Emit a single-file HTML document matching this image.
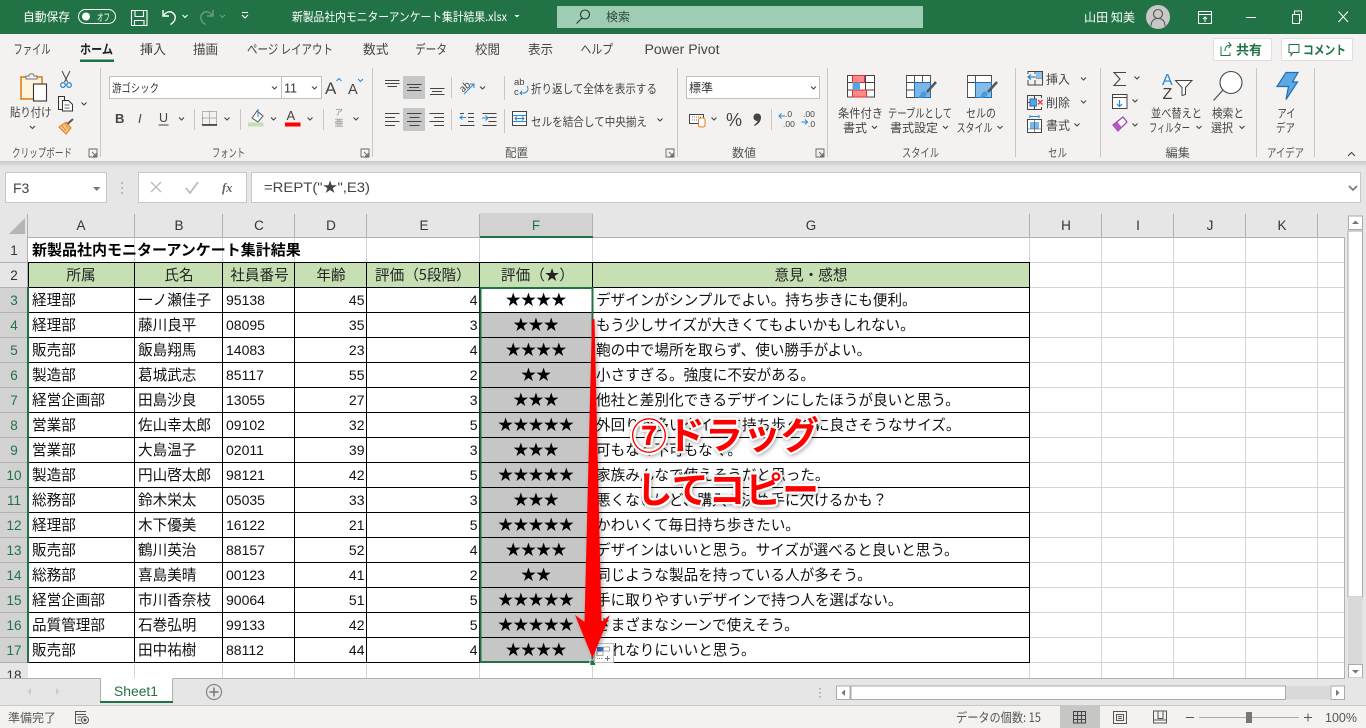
<!DOCTYPE html>
<html lang="ja"><head><meta charset="utf-8"><title>新製品社内モニターアンケート集計結果.xlsx</title>
<style>
html,body{margin:0;padding:0;width:1366px;height:728px;overflow:hidden;background:#fff}
svg{display:block;position:absolute;left:0;top:0}
text{font-family:"Liberation Sans","Noto Sans CJK JP",sans-serif;white-space:pre}
.j{font-family:"Noto Sans CJK JP","Liberation Sans",sans-serif}
.t{font-size:12px;fill:#fff}
.r{font-size:12px;fill:#444}
.l{font-size:12px;fill:#555}
.h{font-size:13.5px;fill:#333;text-anchor:middle}
.n{font-size:14px;fill:#111}
.nr{font-size:14px;fill:#111;text-anchor:end}
.s{font-family:"Noto Sans CJK JP",sans-serif;font-size:14.6px;fill:#111}
.c{font-family:"Noto Sans CJK JP",sans-serif;font-size:14.6px;fill:#222;text-anchor:middle}
.cs{font-family:"Noto Sans CJK JP",sans-serif;font-size:14.6px;fill:#222}
.st{font-family:"Noto Sans CJK JP",sans-serif;font-size:15.2px;fill:#000;text-anchor:middle}
.g{font-size:13.5px;fill:#217346;text-anchor:middle}
.big{font-family:"Noto Sans CJK JP",sans-serif;font-weight:700;fill:#f00;stroke:#fff;stroke-width:4.5px;paint-order:stroke;stroke-linejoin:round;font-size:37px}
</style></head><body>
<svg width="1366" height="728" viewBox="0 0 1366 728" xmlns="http://www.w3.org/2000/svg">
<defs>
<path id="v" d="M-2.5-1.5 0 1 2.5-1.5" fill="none" stroke="#444" stroke-width="1.1"/>
<linearGradient id="sh" x1="0" y1="0" x2="0" y2="1"><stop offset="0" stop-color="#c9c9c9"/><stop offset="1" stop-color="#e6e6e6"/></linearGradient>
<g id="launch"><path d="M0 0h8v8h-8z M3 3l4 4M7 4v3H4" fill="none" stroke="#666" stroke-width=".9"/></g>
</defs>

<!-- backgrounds -->
<rect width="1366" height="728" fill="#e6e6e6"/>
<rect width="1366" height="34" fill="#217346"/>
<rect y="34" width="1366" height="127" fill="#f3f2f1"/>
<rect y="161" width="1366" height="6" fill="url(#sh)"/>

<!-- title bar -->
<text class="t j" x="23" y="21" textLength="47">自動保存</text>
<rect x="78.500" y="9.500" width="37" height="14" rx="7" fill="none" stroke="#fff"/>
<circle cx="86" cy="16.500" r="4" fill="#fff"/>
<text class="j" x="97" y="21" font-size="10" fill="#fff" textLength="13">オフ</text>
<path d="M131.500 10.500h15.500v15h-15.500z M135 10.500v6h8.500v-6 M134.500 25.500v-5h9.500v5" fill="none" stroke="#fff" stroke-width="1.100"/>
<path d="M163 10v6h6 M163.500 15.500c3-4 7-5 10-2 3.500 3.500 1.500 8-3 11" fill="none" stroke="#fff" stroke-width="1.400"/>
<path d="M182.500 15 185 17.500 187.500 15" fill="none" stroke="#fff" stroke-width="1.100"/>
<path d="M213 10v6h-6 M212.500 15.500c-3-4-7-5-10-2-3.500 3.500-1.500 8 3 11" fill="none" stroke="#6a9e81" stroke-width="1.400"/>
<path d="M220 15 222.500 17.500 225 15" fill="none" stroke="#6a9e81" stroke-width="1.100"/>
<path d="M242 12.500h6M242 15 245 18 248 15" fill="none" stroke="#fff" stroke-width="1.100"/>
<text class="t j" x="292" y="21" textLength="215">新製品社内モニターアンケート集計結果.xlsx</text>
<path d="M514.500 15h5l-2.500 2.500z" fill="#fff"/>
<rect x="557" y="6" width="366" height="22" fill="#9fcdb3"/>
<circle cx="585" cy="14.500" r="4.500" fill="none" stroke="#1f3d2c" stroke-width="1.100"/><path d="M582 18 576.500 23.500" stroke="#1f3d2c" stroke-width="1.100"/>
<text class="j" x="606" y="21" font-size="12" fill="#2b4a38" textLength="24">検索</text>
<text class="t j" x="1084" y="21.500" textLength="51">山田 知美</text>
<circle cx="1158" cy="17" r="12" fill="#c8c8c8"/>
<circle cx="1158" cy="14" r="4.500" fill="none" stroke="#555" stroke-width="1.100"/><path d="M1151 26c0-5 3-7.500 7-7.500s7 2.500 7 7.500" fill="none" stroke="#555" stroke-width="1.100"/>
<path d="M1198.500 11.500h13v12h-13z M1198.500 14.500h13 M1205 22v-5 M1203 19l2-2 2 2" fill="none" stroke="#fff" stroke-width="1"/>
<path d="M1246 17.500h10" stroke="#fff" stroke-width="1"/>
<path d="M1292.500 14.500h7v9h-7z M1294.500 14v-3h7v9h-2" fill="none" stroke="#fff" stroke-width="1"/>
<path d="M1338.500 11.500 1348 22M1348 11.500 1338.500 22" stroke="#fff" stroke-width="1"/>

<!-- tabs -->
<text class="r j" x="13.500" y="54" style="font-size:13px" textLength="37">ファイル</text>
<text class="r j" x="80" y="54" style="font-size:13px;font-weight:700;fill:#222" textLength="33">ホーム</text>
<rect x="80" y="59.500" width="34" height="2.500" fill="#217346"/>
<text class="r j" x="140" y="54" style="font-size:13px" textLength="26">挿入</text>
<text class="r j" x="193" y="54" style="font-size:13px" textLength="25">描画</text>
<text class="r j" x="247" y="54" style="font-size:13px" textLength="86">ページ レイアウト</text>
<text class="r j" x="363" y="54" style="font-size:13px" textLength="25.500">数式</text>
<text class="r j" x="415" y="54" style="font-size:13px" textLength="32">データ</text>
<text class="r j" x="475" y="54" style="font-size:13px" textLength="25">校閲</text>
<text class="r j" x="528" y="54" style="font-size:13px" textLength="25">表示</text>
<text class="r j" x="580.500" y="54" style="font-size:13px" textLength="32.500">ヘルプ</text>
<text class="r" x="644.500" y="54" style="font-size:13.500px" textLength="75">Power Pivot</text>
<rect x="1213.500" y="38.500" width="58" height="22" rx="1" fill="#fff" stroke="#e1dfdd"/>
<path d="M1221 46.500v9h9v-3 M1225 51c0-4 2-6 6-6l-2.500-3 M1231 45l-2.500 3" fill="none" stroke="#217346"/>
<text class="j" x="1236" y="54.500" font-size="13" font-weight="700" fill="#217346" textLength="26">共有</text>
<rect x="1281.500" y="38.500" width="71" height="22" rx="1" fill="#fff" stroke="#e1dfdd"/>
<path d="M1289 44.500h10v8h-6l-2 3v-3h-2z" fill="none" stroke="#217346"/>
<text class="j" x="1303" y="54.500" font-size="12.500" font-weight="700" fill="#217346" textLength="43">コメント</text>

<!-- ribbon separators -->
<path d="M100.500 68v89M372.500 68v89M677.500 68v89M827.500 68v89M1015.500 68v89M1100.500 68v89M1256.500 68v89M1314.500 68v89" stroke="#c8c6c4"/>

<!-- clipboard -->
<path d="M21 77h21v22h-21z" fill="#fdf3dc" stroke="#d9780f" stroke-width="1.500"/>
<path d="M26 79v-3h3c0-3 5-3 5 0h3v3z" fill="#f3f2f1" stroke="#777"/>
<rect x="33.500" y="84" width="13" height="17" fill="#fff" stroke="#333" stroke-width="1.100"/>
<path d="M62 71 67.500 82M70 71 64.500 82" stroke="#444"/><circle cx="63" cy="85" r="2.300" fill="#fff" stroke="#2a87d0" stroke-width="1.300"/><circle cx="69" cy="85" r="2.300" fill="#fff" stroke="#2a87d0" stroke-width="1.300"/>
<path d="M58.500 96.500h6v13h-6z" fill="#f3f2f1" stroke="#333"/><path d="M62.500 100.500h6l4 4v6.500h-10z" fill="#fff" stroke="#333"/><path d="M64.500 105h5M64.500 108h5" stroke="#333" stroke-width=".8"/>
<use href="#v" x="84" y="104"/>
<path d="M59 127 66 122 71 128 66 134z" fill="#f8c58c" stroke="#e07b12"/><path d="M62 125.500 66 131M65 123.500 68.500 129" stroke="#e07b12" stroke-width=".8"/><path d="M67.500 124 73 119" stroke="#555" stroke-width="2"/>
<text class="r j" x="10" y="116.500" textLength="41.500">貼り付け</text>
<use href="#v" x="32.500" y="127.500"/>
<text class="l j" x="12" y="157" textLength="60">クリップボード</text>
<use href="#launch" x="89" y="149"/>

<!-- font -->
<rect x="109.500" y="76.500" width="172" height="22" fill="#fff" stroke="#c0c0c0"/>
<rect x="281.500" y="76.500" width="40" height="22" fill="#fff" stroke="#c0c0c0"/>
<text class="j" x="112" y="92" font-size="11.500" fill="#333" textLength="47">游ゴシック</text>
<text x="284" y="92.500" font-size="12.500" fill="#333" textLength="13">11</text>
<use href="#v" x="274.500" y="88"/><use href="#v" x="314.500" y="88"/>
<text x="325" y="94" font-size="17" fill="#444">A</text><path d="M336.500 81 339 78.500 341.500 81" fill="none" stroke="#2a87d0"/>
<text x="348" y="94" font-size="14.500" fill="#444">A</text><path d="M358 79 360.500 81.500 363 79" fill="none" stroke="#2a87d0"/>
<text x="115" y="123" font-size="13" font-weight="700" fill="#444">B</text>
<text x="138" y="123" font-size="13" font-style="italic" fill="#444">I</text>
<text x="159" y="122" font-size="12.500" fill="#444">U</text><path d="M158.500 125h10" stroke="#444"/>
<use href="#v" x="181.500" y="119"/>
<path d="M194.500 109v21" stroke="#c8c6c4"/>
<path d="M202.500 111.500h14v13h-14z M209.500 111.500v13M202.500 118h14" fill="none" stroke="#777" stroke-dasharray="1 1"/><path d="M202 125h15" stroke="#222" stroke-width="1.400"/>
<use href="#v" x="227" y="119"/>
<path d="M240.500 109v21" stroke="#c8c6c4"/>
<path d="M252 118 257 111 263 116 258 122z" fill="#fff" stroke="#555"/><path d="M258 109v8" stroke="#2a87d0"/>
<rect x="248" y="122.500" width="15.500" height="4" fill="#c6e0b4"/>
<use href="#v" x="273.500" y="119"/>
<text x="286.500" y="120" font-size="13" fill="#444">A</text><rect x="285" y="122.500" width="15.500" height="4" fill="#f00"/>
<use href="#v" x="310" y="119"/>
<path d="M323.500 109v21" stroke="#c8c6c4"/>
<text class="j" x="335" y="115" font-size="8" fill="#888">ア</text><text class="j" x="334.500" y="126" font-size="9" fill="#888">亜</text>
<use href="#v" x="356" y="119"/>
<text class="l j" x="212" y="157" textLength="33">フォント</text>
<use href="#launch" x="361" y="149"/>

<!-- alignment -->
<rect x="403" y="76" width="22" height="23" fill="#c6c6c6"/>
<rect x="403" y="108" width="22" height="23" fill="#c6c6c6"/>
<path d="M385 80.500h14.500M385 83.500h14.500 M387.500 86.500h9.500" stroke="#444"/>
<path d="M407 84.500h14.500M409 87.500h10M407 90.500h14.500" stroke="#444"/>
<path d="M430 88.500h14.500M432 91.500h10M430 94.500h14.500" stroke="#444"/>
<path d="M385 113.500h14.500M385 117.500h10M385 121.500h14.500M385 125.500h10" stroke="#444"/>
<path d="M407 113.500h14.500M409.500 117.500h10M407 121.500h14.500M409.500 125.500h10" stroke="#444"/>
<path d="M429.500 113.500h14.500M434 117.500h10M429.500 121.500h14.500M434 125.500h10" stroke="#444"/>
<path d="M451.500 77v21M451.500 109v21M504.500 76v24M504.500 109v24" stroke="#c8c6c4"/>
<text class="j" x="459" y="89" font-size="9.500" fill="#444" transform="rotate(-40 466 86)">ab</text>
<path d="M464 94 474 84M470 84h4v4" fill="none" stroke="#2a87d0"/>
<use href="#v" x="482.500" y="88"/>
<path d="M468 113.500h6M468 117.500h6M468 121.500h6M460 125.500h14.500M460 113.500h4" fill="none" stroke="#444"/>
<path d="M460 117.500h6M462.500 115.500l-2.500 2 2.500 2" fill="none" stroke="#2a87d0"/>
<path d="M482.500 113.500h14M488.500 117.500h8M488.500 121.500h8M482.500 125.500h14" stroke="#444"/>
<path d="M482 118h6M485.500 115.500l2.500 2.500-2.500 2.500" fill="none" stroke="#2a87d0"/>
<text x="514" y="85" font-size="9.500" fill="#444">ab</text><text x="514" y="95" font-size="9.500" fill="#444">c</text>
<path d="M527 86c2 3 1 7-4 7h-3M522 91l-2 2 2 2" fill="none" stroke="#2a87d0"/>
<text class="r j" x="531" y="93" textLength="126">折り返して全体を表示する</text>
<rect x="512.500" y="111.500" width="14" height="14" fill="#fff" stroke="#444"/>
<path d="M512.500 115.500h14M512.500 121.500h14" stroke="#2a87d0"/><path d="M515 118.500h9M517 116.500l-2 2 2 2M522 116.500l2 2-2 2" fill="none" stroke="#2a87d0"/>
<text class="r j" x="531" y="126" textLength="116">セルを結合して中央揃え</text>
<use href="#v" x="660" y="120"/>
<text class="l j" x="505" y="157" textLength="23">配置</text>
<use href="#launch" x="666" y="149"/>

<!-- number -->
<rect x="686.500" y="76.500" width="133" height="22" fill="#fff" stroke="#c0c0c0"/>
<text class="j" x="689" y="92" font-size="12" fill="#333" textLength="24">標準</text>
<use href="#v" x="813.500" y="88"/>
<rect x="689.500" y="114.500" width="14" height="9" fill="#fff" stroke="#444"/><path d="M692 117h9M692 120h9" stroke="#777" stroke-dasharray="1 1"/>
<rect x="698.500" y="118" width="6.500" height="9" rx="2" fill="#fff" stroke="#e97a13"/>
<use href="#v" x="714" y="119"/>
<text x="726" y="126" font-size="18" fill="#444">%</text>
<path d="M757 113.500c2.500 0 4 1.500 4 3.800 0 4-2.500 7-6.500 8.700l-.5-1c2-1.200 3.200-2.500 3.500-4.200-2 .3-4-1-4-3.400 0-2.400 1.500-3.900 3.500-3.900z" fill="#444"/>
<path d="M771.500 109v21" stroke="#c8c6c4"/>
<text x="785" y="117" font-size="8.500" fill="#444">.0</text><text x="783" y="127" font-size="8.500" fill="#444">.00</text>
<path d="M785 116h-6M781.500 113.500l-2.500 2.500 2.500 2.500" fill="none" stroke="#2a87d0"/>
<text x="803" y="117" font-size="8.500" fill="#444">.00</text><text x="808" y="127" font-size="8.500" fill="#444">.0</text>
<path d="M801.500 122h6M805 119.500l2.500 2.500-2.500 2.500" fill="none" stroke="#2a87d0"/>
<text class="l j" x="732" y="157" textLength="24">数値</text>
<use href="#launch" x="816" y="149"/>

<!-- styles -->
<path d="M847.500 75.500h27v21.500h-27z M847.500 82.500h27M847.500 90h27M856.500 75.500v21.500M865.500 75.500v21.500" fill="#fff" stroke="#444"/>
<path d="M852.500 75.500h12v7h-12zM852.500 90h14v7h-14z" fill="#f88" stroke="#d33"/><rect x="852.500" y="82.500" width="7.500" height="7.500" fill="#5aa5e0"/>
<path d="M906.500 75.500h24v22h-24z M906.500 82.500h24M906.500 90h24M914.500 75.500v22M922.500 75.500v22" fill="#fff" stroke="#444" stroke-width=".9"/>
<path d="M914.500 82.500h16v15h-16z" fill="#7ab6e8" stroke="#1f6fb5"/>
<path d="M936 82 927 92" stroke="#555" stroke-width="2.500"/><path d="M922 92c3-2 6 1 4 3.500-1.500 2-5 2.500-8 2 2.500-1 2-3.500 4-5.500z" fill="#4a9ad8"/>
<path d="M967.500 75.500h24v22h-24zM967.500 82.500h24M975.500 75.500v22" fill="#fff" stroke="#444" stroke-width=".9"/>
<path d="M975.500 82.500h16v15h-16z" fill="#85bbe9" stroke="#1f6fb5"/>
<path d="M997 82 988 92" stroke="#555" stroke-width="2.500"/><path d="M983 92c3-2 6 1 4 3.500-1.500 2-5 2.500-8 2 2.500-1 2-3.500 4-5.500z" fill="#4a9ad8"/>
<text class="r j" x="838" y="117.500" textLength="45">条件付き</text>
<text class="r j" x="843" y="132" textLength="24">書式</text><use href="#v" x="874.500" y="127.500"/>
<text class="r j" x="888" y="117.500" textLength="64">テーブルとして</text>
<text class="r j" x="890" y="132" textLength="48">書式設定</text><use href="#v" x="945.500" y="127.500"/>
<text class="r j" x="966" y="117.500" textLength="30">セルの</text>
<text class="r j" x="956.500" y="132" textLength="36">スタイル</text><use href="#v" x="1000" y="127.500"/>
<text class="l j" x="902" y="157" textLength="37">スタイル</text>

<!-- cells -->
<path d="M1028 71.500h14.500v13.500h-14.500z M1028 78h14.500M1035 71.500v13.500" fill="none" stroke="#444"/>
<rect x="1027" y="74" width="9" height="6" fill="#f3f2f1"/><path d="M1036 77h-8M1031 74.500l-3 2.500 3 2.500" fill="none" stroke="#2a87d0" stroke-width="1.200"/><rect x="1036" y="72" width="6" height="6" fill="#8cc0ea"/>
<text class="r j" x="1046" y="83.500" textLength="24">挿入</text><use href="#v" x="1083.500" y="79"/>
<path d="M1027.500 95.500h14v14h-14zM1027.500 102.500h14M1034.500 95.500v14" fill="none" stroke="#444"/>
<rect x="1030" y="99" width="7" height="7" fill="#5aa5e0" stroke="#1f6fb5"/>
<rect x="1037" y="98" width="6" height="9" fill="#f3f2f1"/><path d="M1038 100l4.500 4.500M1042.500 100l-4.500 4.500" stroke="#e33" stroke-width="1.300"/>
<text class="r j" x="1046" y="107" textLength="24">削除</text><use href="#v" x="1083.500" y="102"/>
<path d="M1027.500 119.500h14v13h-14z" fill="#fff" stroke="#444"/><rect x="1030" y="122" width="9" height="7" fill="#7ab6e8"/>
<path d="M1030 116.500h9M1030 115v3M1039 115v3" stroke="#2a87d0"/><path d="M1027.500 129h14M1034.500 119.500v13" stroke="#444" stroke-width=".6"/>
<text class="r j" x="1046" y="129.500" textLength="24">書式</text><use href="#v" x="1077" y="125"/>
<text class="l j" x="1048" y="157" textLength="19">セル</text>

<!-- editing -->
<path d="M1126 72.500h-12l6 6.500-6 6.500h12" fill="none" stroke="#444" stroke-width="1.100"/><use href="#v" x="1137" y="78"/>
<rect x="1112.500" y="94.500" width="14.500" height="14" fill="#fff" stroke="#444"/><path d="M1112.500 97.500h14.500" stroke="#444"/><path d="M1119.500 100v6.500M1117 104l2.500 2.500 2.500-2.500" fill="none" stroke="#2a87d0" stroke-width="1.200"/>
<use href="#v" x="1135" y="101"/>
<path d="M1113 125 1123 117 1127 122 1118 131z" fill="#fff" stroke="#a13fb0" stroke-width="1.200"/><path d="M1113 125 1118 131 1122 127.500 1117.500 122z" fill="#b15cc0"/>
<use href="#v" x="1135" y="125"/>
<text x="1162" y="85" font-size="16" fill="#2a87d0">A</text>
<text x="1162.500" y="99" font-size="16" fill="#444">Z</text>
<path d="M1175.500 80.500h16.500l-6.500 7v7l-3.500 1v-8z" fill="#fff" stroke="#444"/>
<circle cx="1231" cy="82.500" r="11" fill="#fff" stroke="#444" stroke-width="1.100"/><path d="M1223 90 1213.500 100.500" stroke="#444" stroke-width="1.100"/>
<text class="r j" x="1151" y="117.500" textLength="51">並べ替えと</text>
<text class="r j" x="1149" y="132" textLength="41">フィルター</text><use href="#v" x="1199" y="127.500"/>
<text class="r j" x="1212" y="117.500" textLength="32">検索と</text>
<text class="r j" x="1211" y="132" textLength="22">選択</text><use href="#v" x="1242" y="127.500"/>
<text class="l j" x="1165.500" y="157" textLength="24.500">編集</text>

<!-- ideas -->
<path d="M1285 72.500h12l-5.500 9.500h5l-11.500 17.500 2.500-13h-11.500z" transform="translate(1 0)" fill="#5da8e4" stroke="#1f6fb5" stroke-width="1.200"/>
<text class="r j" x="1277.500" y="117.500" textLength="18">アイ</text>
<text class="r j" x="1276" y="132" textLength="19">デア</text>
<text class="l j" x="1267" y="157" textLength="37">アイデア</text>
<path d="M1348 156 1351.500 152.500 1355 156" fill="none" stroke="#444" stroke-width="1.100"/>

<!-- formula bar -->
<rect x="5.500" y="172.500" width="101" height="30" fill="#fff" stroke="#c8c8c8"/>
<text x="13" y="193" font-size="14" fill="#444">F3</text>
<path d="M93 187h7.500l-3.750 4z" fill="#777"/>
<path d="M122 182v2M122 187v2M122 192v2" stroke="#aaa" stroke-width="1.500"/>
<rect x="138.500" y="172.500" width="108" height="30" fill="#fff" stroke="#c8c8c8"/>
<path d="M151 182 161 192M161 182 151 192" stroke="#bbb" stroke-width="1.400"/>
<path d="M186 188 190 193 198 182" fill="none" stroke="#bbb" stroke-width="1.800"/>
<text x="222" y="192" font-size="12.500" font-style="italic" font-weight="700" fill="#666" style="font-family:'Liberation Serif',serif">fx</text>
<rect x="251.500" y="172.500" width="1109" height="30" fill="#fff" stroke="#c8c8c8"/>
<text x="264" y="192" font-size="14" fill="#444" textLength="106">=REPT("★",E3)</text>
<path d="M1349 186 1353 190 1357 186" fill="none" stroke="#777" stroke-width="1.600"/>

<!-- sheet -->
<rect x="28" y="238" width="1316" height="440" fill="#fff"/>
<rect x="0" y="213" width="28" height="465" fill="#e6e6e6"/>
<path d="M25 218v16H9z" fill="#b5b5b5"/>
<rect x="480" y="213" width="113" height="24" fill="#d2d2d2"/>
<rect x="0" y="288" width="28" height="374" fill="#d2d2d2"/>
<!-- gridlines -->
<g stroke="#d4d4d4" fill="none">
<path d="M134.500 238v440M222.500 238v440M294.500 238v440M366.500 238v440M479.500 238v440M592.500 238v440M1029.500 238v440M1101.500 238v440M1173.500 238v440M1245.500 238v440M1317.500 238v440"/>
<path d="M28 262.500h1316M28 287.500h1316M28 312.500h1316M28 337.500h1316M28 362.500h1316M28 387.500h1316M28 412.500h1316M28 437.500h1316M28 462.500h1316M28 487.500h1316M28 512.500h1316M28 537.500h1316M28 562.500h1316M28 587.500h1316M28 612.500h1316M28 637.500h1316M28 662.500h1316"/>
</g>
<g stroke="#b0b0b0" fill="none">
<path d="M134.500 214v23M222.500 214v23M294.500 214v23M366.500 214v23M479.500 214v23M592.500 214v23M1029.500 214v23M1101.500 214v23M1173.500 214v23M1245.500 214v23M1317.500 214v23"/>
<path d="M0 262.500h28M0 287.500h28M0 312.500h28M0 337.500h28M0 362.500h28M0 387.500h28M0 412.500h28M0 437.500h28M0 462.500h28M0 487.500h28M0 512.500h28M0 537.500h28M0 562.500h28M0 587.500h28M0 612.500h28M0 637.500h28M0 662.500h28"/>
<path d="M28 237.500H1344.500V678"/><path d="M27.500 214V288"/>
</g>
<!-- header fill, selection fill -->
<rect x="29" y="263" width="1000" height="24" fill="#c6e0b4"/>
<rect x="481" y="313" width="111" height="348" fill="#c6c6c6"/>
<!-- borders -->
<g stroke="#000" fill="none">
<path d="M28 262.500H1030M28 287.500H1030M28 312.500H1030M28 337.500H1030M28 362.500H1030M28 387.500H1030M28 412.500H1030M28 437.500H1030M28 462.500H1030M28 487.500H1030M28 512.500H1030M28 537.500H1030M28 562.500H1030M28 587.500H1030M28 612.500H1030M28 637.500H1030M28 662.500H1030"/>
<path d="M134.500 262v401M222.500 262v401M294.500 262v401M366.500 262v401M479.500 262v401M592.500 262v401M1029.500 262v401M28.500 262v26"/>
</g>
<rect x="27" y="287" width="2" height="376" fill="#217346"/>
<rect x="480" y="236" width="113" height="2" fill="#217346"/>
<rect x="480.500" y="288" width="112" height="374" fill="none" stroke="#217346" stroke-width="2"/>
<rect x="590" y="660" width="5.500" height="5.500" fill="#217346" stroke="#fff" stroke-width=".8"/>

<!-- column letters -->
<text class="h" x="81" y="230">A</text><text class="h" x="179" y="230">B</text><text class="h" x="259" y="230">C</text><text class="h" x="331" y="230">D</text><text class="h" x="424" y="230">E</text><text class="g" x="536" y="230">F</text><text class="h" x="811" y="230">G</text><text class="h" x="1066" y="230">H</text><text class="h" x="1138" y="230">I</text><text class="h" x="1210" y="230">J</text><text class="h" x="1282" y="230">K</text>
<!-- row numbers -->
<text class="h" x="14" y="255">1</text><text class="h" x="14" y="280">2</text>
<text class="g" x="14" y="305">3</text><text class="g" x="14" y="330">4</text><text class="g" x="14" y="355">5</text><text class="g" x="14" y="380">6</text><text class="g" x="14" y="405">7</text><text class="g" x="14" y="430">8</text><text class="g" x="14" y="455">9</text><text class="g" x="14" y="480">10</text><text class="g" x="14" y="505">11</text><text class="g" x="14" y="530">12</text><text class="g" x="14" y="555">13</text><text class="g" x="14" y="580">14</text><text class="g" x="14" y="605">15</text><text class="g" x="14" y="630">16</text><text class="g" x="14" y="655">17</text><text class="h" x="14" y="680">18</text>

<!-- titles -->
<text class="s" x="32" y="255" style="font-weight:700;fill:#000;font-size:15px">新製品社内モニターアンケート集計結果</text>
<text class="c" x="81" y="280">所属</text>
<text class="c" x="179" y="280">氏名</text>
<text class="c" x="259.500" y="280">社員番号</text>
<text class="c" x="331" y="280">年齢</text>
<text class="cs" x="375" y="280">評価（5段階）</text>
<text class="cs" x="501" y="280">評価（★）</text>
<text class="c" x="811" y="280">意見・感想</text>

<!-- col A -->
<text class="s" x="32" y="305">経理部</text><text class="s" x="32" y="330">経理部</text><text class="s" x="32" y="355">販売部</text><text class="s" x="32" y="380">製造部</text><text class="s" x="32" y="405">経営企画部</text><text class="s" x="32" y="430">営業部</text><text class="s" x="32" y="455">営業部</text><text class="s" x="32" y="480">製造部</text><text class="s" x="32" y="505">総務部</text><text class="s" x="32" y="530">経理部</text><text class="s" x="32" y="555">販売部</text><text class="s" x="32" y="580">総務部</text><text class="s" x="32" y="605">経営企画部</text><text class="s" x="32" y="630">品質管理部</text><text class="s" x="32" y="655">販売部</text>
<text class="s" x="138" y="305">一ノ瀬佳子</text><text class="s" x="138" y="330">藤川良平</text><text class="s" x="138" y="355">飯島翔馬</text><text class="s" x="138" y="380">葛城武志</text><text class="s" x="138" y="405">田島沙良</text><text class="s" x="138" y="430">佐山幸太郎</text><text class="s" x="138" y="455">大島温子</text><text class="s" x="138" y="480">円山啓太郎</text><text class="s" x="138" y="505">鈴木栄太</text><text class="s" x="138" y="530">木下優美</text><text class="s" x="138" y="555">鶴川英治</text><text class="s" x="138" y="580">喜島美晴</text><text class="s" x="138" y="605">市川香奈枝</text><text class="s" x="138" y="630">石巻弘明</text><text class="s" x="138" y="655">田中祐樹</text>
<text class="n" x="226" y="305">95138</text><text class="n" x="226" y="330">08095</text><text class="n" x="226" y="355">14083</text><text class="n" x="226" y="380">85117</text><text class="n" x="226" y="405">13055</text><text class="n" x="226" y="430">09102</text><text class="n" x="226" y="455">02011</text><text class="n" x="226" y="480">98121</text><text class="n" x="226" y="505">05035</text><text class="n" x="226" y="530">16122</text><text class="n" x="226" y="555">88157</text><text class="n" x="226" y="580">00123</text><text class="n" x="226" y="605">90064</text><text class="n" x="226" y="630">99133</text><text class="n" x="226" y="655">88112</text>
<text class="nr" x="364.500" y="305">45</text><text class="nr" x="364.500" y="330">35</text><text class="nr" x="364.500" y="355">23</text><text class="nr" x="364.500" y="380">55</text><text class="nr" x="364.500" y="405">27</text><text class="nr" x="364.500" y="430">32</text><text class="nr" x="364.500" y="455">39</text><text class="nr" x="364.500" y="480">42</text><text class="nr" x="364.500" y="505">33</text><text class="nr" x="364.500" y="530">21</text><text class="nr" x="364.500" y="555">52</text><text class="nr" x="364.500" y="580">41</text><text class="nr" x="364.500" y="605">51</text><text class="nr" x="364.500" y="630">42</text><text class="nr" x="364.500" y="655">44</text>
<text class="nr" x="477.500" y="305">4</text><text class="nr" x="477.500" y="330">3</text><text class="nr" x="477.500" y="355">4</text><text class="nr" x="477.500" y="380">2</text><text class="nr" x="477.500" y="405">3</text><text class="nr" x="477.500" y="430">5</text><text class="nr" x="477.500" y="455">3</text><text class="nr" x="477.500" y="480">5</text><text class="nr" x="477.500" y="505">3</text><text class="nr" x="477.500" y="530">5</text><text class="nr" x="477.500" y="555">4</text><text class="nr" x="477.500" y="580">2</text><text class="nr" x="477.500" y="605">5</text><text class="nr" x="477.500" y="630">5</text><text class="nr" x="477.500" y="655">4</text>
<text class="st" x="536" y="305">★★★★</text><text class="st" x="536" y="330">★★★</text><text class="st" x="536" y="355">★★★★</text><text class="st" x="536" y="380">★★</text><text class="st" x="536" y="405">★★★</text><text class="st" x="536" y="430">★★★★★</text><text class="st" x="536" y="455">★★★</text><text class="st" x="536" y="480">★★★★★</text><text class="st" x="536" y="505">★★★</text><text class="st" x="536" y="530">★★★★★</text><text class="st" x="536" y="555">★★★★</text><text class="st" x="536" y="580">★★</text><text class="st" x="536" y="605">★★★★★</text><text class="st" x="536" y="630">★★★★★</text><text class="st" x="536" y="655">★★★★</text>
<text class="s" x="596" y="305">デザインがシンプルでよい。持ち歩きにも便利。</text>
<text class="s" x="596" y="330">もう少しサイズが大きくてもよいかもしれない。</text>
<text class="s" x="596" y="355">鞄の中で場所を取らず、使い勝手がよい。</text>
<text class="s" x="596" y="380">小さすぎる。強度に不安がある。</text>
<text class="s" x="596" y="405">他社と差別化できるデザインにしたほうが良いと思う。</text>
<text class="s" x="596" y="430">外回りが多いタイプに持ち歩くのに良さそうなサイズ。</text>
<text class="s" x="596" y="455">可もなく不可もなく。</text>
<text class="s" x="596" y="480">家族みんなで使えそうだと思った。</text>
<text class="s" x="596" y="505">悪くないけど、購入の決め手に欠けるかも？</text>
<text class="s" x="596" y="530">かわいくて毎日持ち歩きたい。</text>
<text class="s" x="596" y="555">デザインはいいと思う。サイズが選べると良いと思う。</text>
<text class="s" x="596" y="580">同じような製品を持っている人が多そう。</text>
<text class="s" x="596" y="605">手に取りやすいデザインで持つ人を選ばない。</text>
<text class="s" x="596" y="630">さまざまなシーンで使えそう。</text>
<text class="s" x="596" y="655">それなりにいいと思う。</text>

<!-- smart tag -->
<rect x="594.500" y="643.500" width="19" height="19" fill="#fff" stroke="#bbb"/>
<rect x="597" y="647" width="6" height="4" fill="#3a6fd0"/><rect x="603.500" y="647" width="6" height="4" fill="#fff" stroke="#888" stroke-width=".7"/>
<rect x="597" y="651.500" width="6" height="4" fill="#fff" stroke="#888" stroke-width=".7"/>
<path d="M597 658.500h6" stroke="#777" stroke-dasharray="1 1"/><path d="M605 658.500h5M607.500 656v5" stroke="#777"/>

<!-- red arrow -->
<g style="filter:drop-shadow(2px 2px 2px rgba(0,0,0,.3))">
<path d="M592 319H594.500L601.500 622 610 615 592.500 658 575 615 584.500 622z" fill="#f00"/>
</g>
<!-- annotation -->
<g style="filter:drop-shadow(1.500px 1.500px 2px rgba(0,0,0,.35))">
<text class="big" x="631" y="449"><tspan style="font-size:36px">⑦</tspan><tspan style="font-size:38px">ドラッグ</tspan></text>
<text class="big" x="636" y="503" textLength="183">してコピー</text>
</g>

<!-- vertical scrollbar -->
<rect x="1345" y="213" width="21" height="466" fill="#e6e6e6"/>
<rect x="1348" y="231" width="14.500" height="366" fill="#fff" stroke="#aaa"/>
<rect x="1348" y="597" width="14.500" height="67" fill="#d9d9d9"/>
<rect x="1348.500" y="216" width="14" height="13.500" fill="#fff" stroke="#aaa"/>
<path d="M1352 224h7l-3.500-3.500z" fill="#777"/>
<rect x="1348.500" y="664.500" width="14" height="13.500" fill="#fff" stroke="#aaa"/>
<path d="M1352 670h7l-3.500 3.500z" fill="#777"/>

<!-- sheet tabs -->
<rect x="0" y="678" width="1366" height="28" fill="#e6e6e6"/>
<path d="M0 678.500H1345M0 705.500H1366" stroke="#b0b0b0"/>
<path d="M31 688v7l-3.500-3.500zM56 688v7l3.500-3.500z" fill="#ccc"/>
<path d="M100.500 678v24h72v-24" fill="#fff" stroke="#b0b0b0"/>
<rect x="101" y="678" width="71.500" height="1" fill="#fff"/>
<rect x="100" y="701" width="73" height="2" fill="#217346"/>
<text x="114" y="696" font-size="13.500" fill="#217346" textLength="44">Sheet1</text>
<circle cx="214" cy="692" r="7.500" fill="#e6e6e6" stroke="#888" stroke-width="1.200"/><path d="M209.500 692h9M214 687.500v9" stroke="#777" stroke-width="1.500"/>
<path d="M820 688v1.500M820 692v1.500M820 696v1.500" stroke="#999" stroke-width="1.300"/>
<rect x="836.500" y="686" width="13.500" height="13.500" fill="#fff" stroke="#aaa"/><path d="M845 689.500v6.500l-3.500-3.250z" fill="#777"/>
<rect x="851" y="686" width="434.500" height="13.500" fill="#fff" stroke="#aaa"/>
<rect x="1286" y="686" width="44" height="13.500" fill="#d9d9d9"/>
<rect x="1331" y="686" width="13.500" height="13.500" fill="#fff" stroke="#aaa"/><path d="M1336 689.500v6.500l3.500-3.250z" fill="#777"/>

<!-- status bar -->
<rect x="0" y="706" width="1366" height="22" fill="#f3f2f1"/>
<path d="M0 705.500H1366" stroke="#c8c8c8"/>
<text class="j" x="8" y="722" font-size="12" fill="#555" textLength="48">準備完了</text>
<path d="M86 711.500h-10.500v12h6M75.500 714.500h10.500M77.500 717h4M77.500 720h3" fill="none" stroke="#555"/><circle cx="85" cy="720" r="3.500" fill="#f3f2f1" stroke="#555"/><circle cx="85" cy="720" r="1.500" fill="#555"/>
<text class="j" x="956" y="722" font-size="12.500" fill="#555" textLength="85">データの個数: 15</text>
<rect x="1060" y="706" width="40" height="22" fill="#c6c6c4"/>
<path d="M1073.500 711.500h12v11.500h-12zM1073.500 715.500h12M1073.500 719.500h12M1077.500 711.500v11.500M1081.500 711.500v11.500" fill="none" stroke="#444"/>
<path d="M1113.500 711.500h13v12h-13zM1116.500 714.500h7v6h-7zM1118 716.500h4M1118 718.500h4" fill="none" stroke="#555"/>
<path d="M1153.500 723v-12h13v12zM1158 711.500v7h5v-7M1153.500 720h13" fill="none" stroke="#555"/>
<path d="M1186 717.500h8" stroke="#555"/>
<path d="M1199 717.500h100" stroke="#aaa"/>
<rect x="1246" y="712" width="6" height="11" fill="#777"/>
<path d="M1304 717.500h8M1308 713.500v8" stroke="#555"/>
<text x="1325" y="722" font-size="12.500" fill="#555" textLength="32">100%</text>
</svg>
<script>document.querySelectorAll('[textLength]').forEach(function(e){e.setAttribute('lengthAdjust','spacingAndGlyphs')});</script>
</body></html>
